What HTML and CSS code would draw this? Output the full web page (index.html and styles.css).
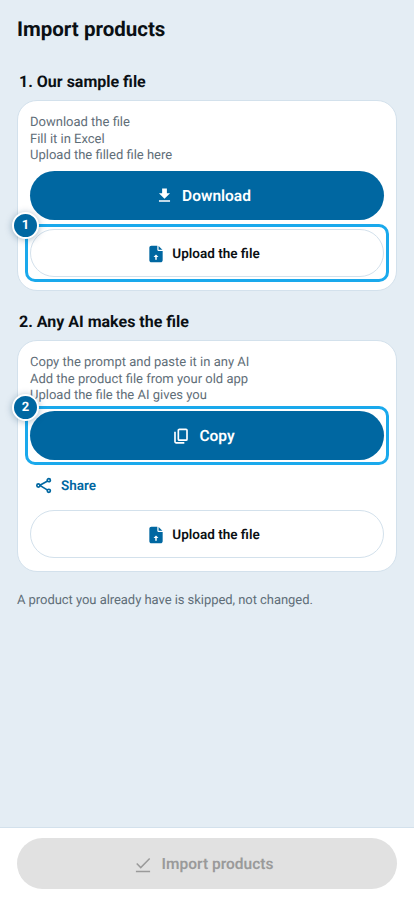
FILE: index.html
```html
<!DOCTYPE html>
<html lang="en">
<head>
<meta charset="utf-8">
<title>Import products</title>
<link rel="stylesheet" href="styles.css">
</head>
<body>
<main class="content">
  <h1 class="title">Import products</h1>
  <h2 class="section-title first">1. Our sample file</h2>
  <section class="card">
    <p class="steps">Download the file<br>Fill it in Excel<br>Upload the filled file here</p>
    <button class="btn primary">
      <svg class="icon download" viewBox="0 0 24 24"><path d="M19 9h-4V3H9v6H5l7 7 7-7zM5 18v2h14v-2H5z"/></svg>
      Download
    </button>
    <div class="spot spot-upload">
      <span class="ring"></span>
      <span class="badge">1</span>
      <button class="btn outline">
        <svg class="icon file" viewBox="0 0 24 24"><path fill-rule="evenodd" d="M13.600 2H6.500C5.100 2 4 3.100 4 4.500v15C4 20.900 5.100 22 6.500 22h11c1.400 0 2.500-1.100 2.500-2.500V8.400h-4.500c-1 0-1.900-.8-1.900-1.900V2zM12 12.500l3 3.100h-2.100V19h-1.800v-3.400H9l3-3.100z"/><path d="M15.100 2.300l4.600 4.600h-4.600z"/></svg>
        Upload the file
      </button>
    </div>
  </section>

  <h2 class="section-title">2. Any AI makes the file</h2>
  <section class="card">
    <p class="steps">Copy the prompt and paste it in any AI<br>Add the product file from your old app<br>Upload the file the AI gives you</p>
    <div class="spot spot-copy">
      <span class="ring"></span>
      <span class="badge">2</span>
      <button class="btn primary">
        <svg class="icon copy" viewBox="0 0 24 24"><path fill="none" stroke="currentColor" stroke-width="2" d="M8.800 5.200c0-.8.600-1.200 1.200-1.200h8c.8 0 1.200.5 1.200 1.200v10.600c0 .7-.4 1.200-1.200 1.200h-8c-.6 0-1.200-.5-1.200-1.200zM4.800 7v12c0 .7.500 1.200 1.200 1.200h10"/></svg>
        Copy
      </button>
    </div>
    <a class="share">
      <svg class="icon share-icon" viewBox="0 0 24 24"><g fill="none" stroke="currentColor" stroke-width="2.400"><path d="M17.800 5.500L6.800 11.800l11 6.700"/><circle cx="19.500" cy="4.500" r="2.200" fill="#fff"/><circle cx="4.800" cy="12" r="2.200" fill="#fff"/><circle cx="19.500" cy="19.500" r="2.200" fill="#fff"/></g></svg>
      Share
    </a>
    <button class="btn outline">
      <svg class="icon file" viewBox="0 0 24 24"><path fill-rule="evenodd" d="M13.600 2H6.500C5.100 2 4 3.100 4 4.500v15C4 20.900 5.100 22 6.500 22h11c1.400 0 2.500-1.100 2.500-2.500V8.400h-4.500c-1 0-1.900-.8-1.900-1.900V2zM12 12.500l3 3.100h-2.100V19h-1.800v-3.400H9l3-3.100z"/><path d="M15.100 2.300l4.600 4.600h-4.600z"/></svg>
      Upload the file
    </button>
  </section>
  <p class="note">A product you already have is skipped, not changed.</p>
</main>
<footer class="footer">
  <button class="btn disabled">
    <svg class="icon check" viewBox="0 0 24 24"><path fill="none" stroke="currentColor" stroke-width="1.800" d="M4.500 11.500l4.800 4.800L20 5.500M3.500 21h17"/></svg>
    Import products
  </button>
</footer>
</body>
</html>
```
FILE: styles.css
```css
* { box-sizing: border-box; }
html, body { margin: 0; padding: 0; }
body {
  width: 414px;
  height: 900px;
  display: flex;
  flex-direction: column;
  background: #e4edf4;
  font-family: Roboto, "Liberation Sans", sans-serif;
  color: #0b1014;
  overflow: hidden;
  text-rendering: geometricPrecision;
}
.content { flex: 1; padding: 17px 17px 0; }
.title { margin: 0; font-size: 20.500px; line-height: 26px; font-weight: 700; }
.section-title { margin: 20px 0 0 2px; font-size: 16px; line-height: 22px; font-weight: 700; height: 29px; }
.section-title.first { margin-top: 28px; }
.card {
  background: #fff;
  border: 1px solid #d3e1ec;
  border-radius: 20px;
  padding: 13px 12px 13px;
  display: flex;
  flex-direction: column;
}
.steps { margin: 0 0 7px; padding-top: 1px; font-size: 13px; line-height: 16.500px; color: #5f6e78; height: 50px; }
.btn {
  width: 100%;
  height: 49px;
  border-radius: 25px;
  border: 0;
  display: flex;
  align-items: center;
  justify-content: center;
  font-family: inherit;
  font-weight: 600;
  padding: 0 8px 0 0;
  text-rendering: geometricPrecision;
}
.primary { background: #0067a1; color: #fff; font-size: 15.500px; gap: 8px; }
.outline { background: #fff; color: #0b1014; border: 1px solid #d3e1ec; font-size: 13.500px; gap: 6px; height: 48px; padding-top: 1px; }
.disabled { background: #e1e1e1; color: #9a9a9a; font-size: 15.500px; gap: 9px; height: 51px; border-radius: 26px; }
.icon { width: 20px; height: 20px; fill: currentColor; flex: none; }
.download { width: 19px; height: 19px; }
.file { color: #0067a1; }
.share-icon { width: 17px; height: 17px; color: #0067a1; }
.spot { position: relative; }
.spot-upload { margin-top: 9px; }
.ring {
  position: absolute;
  inset: -5px;
  border: 3px solid #1aa9ec;
  border-radius: 10px;
  pointer-events: none;
}
.badge {
  position: absolute;
  left: -18px;
  top: -17.500px;
  width: 27px;
  height: 27px;
  border-radius: 50%;
  background: #0067a1;
  border: 2px solid #fff;
  box-shadow: 0 1px 7px rgba(0, 60, 100, .35);
  color: #fff;
  font-size: 13px;
  font-weight: 700;
  display: flex;
  align-items: center;
  justify-content: center;
  z-index: 1;
}
.share {
  display: flex;
  align-items: center;
  gap: 9px;
  height: 50px;
  padding: 1px 0 0 5px;
  color: #0067a1;
  font-size: 13.500px;
  font-weight: 600;
}
.note { margin: 21px 0 0; font-size: 13px; line-height: 16px; color: #5f6e78; letter-spacing: -.05px; }
.footer {
  height: 73px;
  background: #fff;
  border-top: 1px solid #d3e1ec;
  padding: 10px 17px 0;
}
```
